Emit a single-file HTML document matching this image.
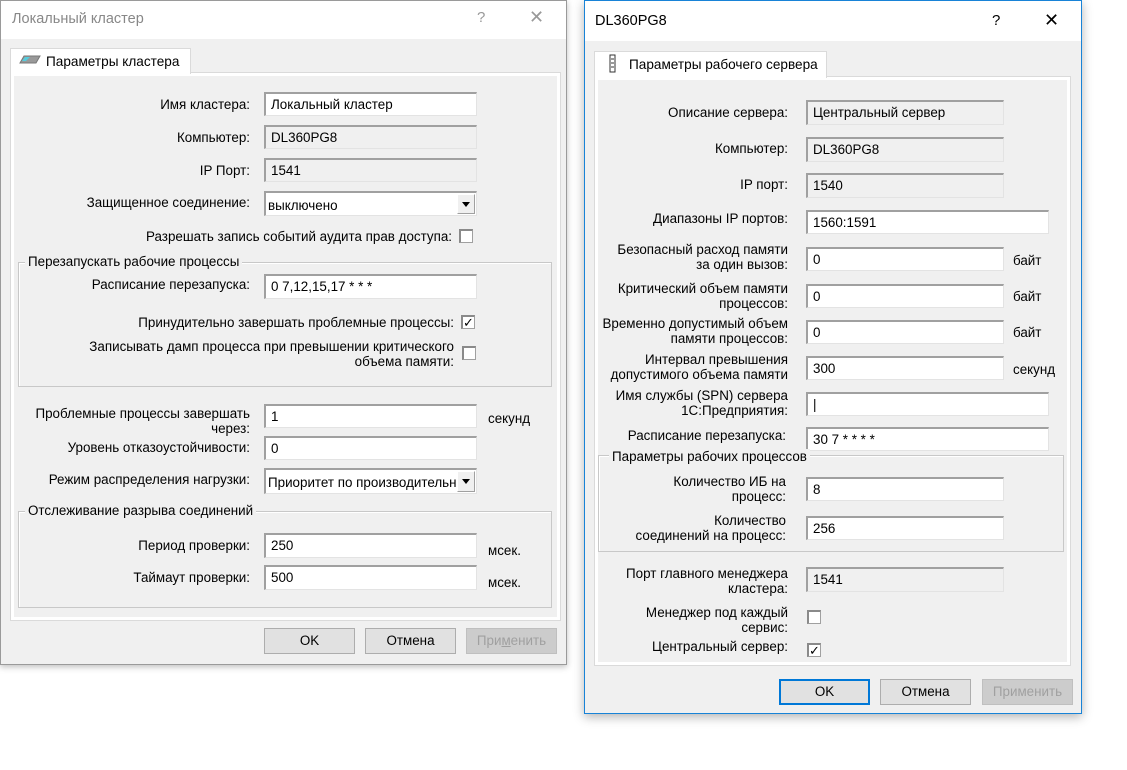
<!DOCTYPE html>
<html><head><meta charset="utf-8"><style>
*{box-sizing:border-box;margin:0;padding:0}
body{width:1127px;height:770px;background:#fff;position:relative;overflow:hidden;font-family:"Liberation Sans","DejaVu Sans",sans-serif;font-size:13.4px;color:#000}
div{position:absolute}
.dlg{background:#f0f0f0}
.tb{background:#fff;left:0;right:0;top:0}
.panel{background:#f0f0f0;border:1px solid #dadada;box-shadow:inset 0 0 0 3px #fff}
.tab{background:#fff;border:1px solid #dadada;border-bottom:none}
.l{text-align:right;line-height:15px;white-space:nowrap}
.in{background:#fff;border:1px solid #e3e3e3;border-top:2px solid #a0a0a0;border-left:2px solid #a0a0a0;padding:3px 0 0 5px;white-space:nowrap;overflow:hidden;line-height:15px}
.ro{background:#f0f0f0}
.cb{width:14px;height:14px;background:#fff;border:1px solid #a0a0a0;border-top:2px solid #8a8a8a;border-left:2px solid #8a8a8a;font-size:13px;line-height:11px;text-align:center;font-weight:bold}
.dd{right:1px;top:1px;width:18px;bottom:1px;background:#f0f0f0;border:1px solid #a0a0a0;border-top-color:#fff;border-left-color:#fff}
.dd:after{content:"";position:absolute;left:4px;top:7px;border-left:4px solid transparent;border-right:4px solid transparent;border-top:5px solid #000}
.grp{border:1px solid #c8c8c8;box-shadow:inset 1px 1px 0 #fff}
.lg{background:#f0f0f0;padding:0 3px;line-height:15px;white-space:nowrap}
.btn{height:26px;background:#e1e1e1;border:1px solid #adadad;text-align:center;line-height:24px}
.dis{color:#a0a0a0;background:#ccc;border-color:#bfbfbf}
</style></head><body>

<!-- LEFT DIALOG -->
<div class="dlg" style="left:0;top:0;width:567px;height:665px;border:1px solid #9a9a9a;box-shadow:0 2px 6px rgba(0,0,0,.25)">
 <div class="tb" style="height:38px"></div>
 <div style="left:11px;top:10px;font-size:14.5px;color:#888">Локальный кластер</div>
 <div style="left:476px;top:8px;font-size:15px;color:#999">?</div>
 <div style="left:528px;top:6px;font-size:18px;color:#999;font-weight:100">✕</div>
 <div class="panel" style="left:9px;top:71px;width:551px;height:549px"></div>
 <div class="tab" style="left:9px;top:47px;width:181px;height:26px"></div>
 <svg style="position:absolute;left:17px;top:52px" width="24" height="14"><polygon points="6,3 22,3 18,10 2,10" fill="#999" stroke="#777"/><polygon points="7,4 12,4 8,8 4,8" fill="#5cd"/></svg>
 <div style="left:45px;top:53px;font-size:13.6px">Параметры кластера</div>

 <div class="l" style="left:0;width:249px;top:96px">Имя кластера:</div>
 <div class="in" style="left:263px;top:91px;width:213px;height:24px">Локальный кластер</div>
 <div class="l" style="left:0;width:249px;top:129px">Компьютер:</div>
 <div class="in ro" style="left:263px;top:124px;width:213px;height:24px">DL360PG8</div>
 <div class="l" style="left:0;width:249px;top:162px">IP Порт:</div>
 <div class="in ro" style="left:263px;top:157px;width:213px;height:24px">1541</div>
 <div class="l" style="left:0;width:249px;top:194px">Защищенное соединение:</div>
 <div class="in" style="left:263px;top:190px;width:213px;height:25px;padding-top:5px;padding-left:2px">выключено<div class="dd"></div></div>
 <div class="l" style="left:0;width:451px;top:228px">Разрешать запись событий аудита прав доступа:</div>
 <div class="cb" style="left:458px;top:228px"></div>

 <div class="grp" style="left:17px;top:261px;width:534px;height:125px"></div>
 <div class="lg" style="left:24px;top:253px">Перезапускать рабочие процессы</div>
 <div class="l" style="left:0;width:249px;top:276px">Расписание перезапуска:</div>
 <div class="in" style="left:263px;top:273px;width:213px;height:25px">0 7,12,15,17 * * *</div>
 <div class="l" style="left:0;width:453px;top:314px">Принудительно завершать проблемные процессы:</div>
 <div class="cb" style="left:460px;top:314px">✓</div>
 <div class="l" style="left:0;width:453px;top:338px">Записывать дамп процесса при превышении критического<br>объема памяти:</div>
 <div class="cb" style="left:461px;top:345px"></div>

 <div class="l" style="left:0;width:249px;top:405px">Проблемные процессы завершать<br>через:</div>
 <div class="in" style="left:263px;top:403px;width:213px;height:24px">1</div>
 <div style="left:487px;top:410px">секунд</div>
 <div class="l" style="left:0;width:249px;top:439px">Уровень отказоустойчивости:</div>
 <div class="in" style="left:263px;top:435px;width:213px;height:24px">0</div>
 <div class="l" style="left:0;width:249px;top:471px">Режим распределения нагрузки:</div>
 <div class="in" style="left:263px;top:467px;width:213px;height:26px;padding-top:5px;padding-left:2px">Приоритет по производительн<div class="dd"></div></div>

 <div class="grp" style="left:17px;top:510px;width:534px;height:97px"></div>
 <div class="lg" style="left:24px;top:502px">Отслеживание разрыва соединений</div>
 <div class="l" style="left:0;width:249px;top:537px">Период проверки:</div>
 <div class="in" style="left:263px;top:532px;width:213px;height:25px">250</div>
 <div style="left:487px;top:542px">мсек.</div>
 <div class="l" style="left:0;width:249px;top:569px">Таймаут проверки:</div>
 <div class="in" style="left:263px;top:564px;width:213px;height:25px">500</div>
 <div style="left:487px;top:574px">мсек.</div>

 <div class="btn" style="left:263px;top:627px;width:91px">OK</div>
 <div class="btn" style="left:364px;top:627px;width:91px">Отмена</div>
 <div class="btn dis" style="left:465px;top:627px;width:91px">При<u>м</u>енить</div>
</div>

<!-- RIGHT DIALOG -->
<div class="dlg" style="left:584px;top:0;width:498px;height:714px;border:1px solid #1883d7;box-shadow:0 3px 10px rgba(0,0,0,.3)">
 <div class="tb" style="height:40px"></div>
 <div style="left:10px;top:12px;font-size:14.5px">DL360PG8</div>
 <div style="left:407px;top:11px;font-size:15px">?</div>
 <div style="left:459px;top:9px;font-size:18px;font-weight:100">✕</div>
 <div class="panel" style="left:9px;top:75px;width:477px;height:590px"></div>
 <div class="tab" style="left:9px;top:50px;width:233px;height:27px"></div>
 <svg style="position:absolute;left:23px;top:53px" width="10" height="20"><rect x="2" y="1" width="5" height="17" fill="#fff" stroke="#333"/><line x1="3" y1="5" x2="6" y2="5" stroke="#333"/><line x1="3" y1="9" x2="6" y2="9" stroke="#333"/><line x1="3" y1="13" x2="6" y2="13" stroke="#333"/></svg>
 <div style="left:44px;top:56px;font-size:13.6px">Параметры рабочего сервера</div>

 <div class="l" style="left:0;width:203px;top:104px">Описание сервера:</div>
 <div class="in ro" style="left:221px;top:99px;width:198px;height:25px">Центральный сервер</div>
 <div class="l" style="left:0;width:203px;top:140px">Компьютер:</div>
 <div class="in ro" style="left:221px;top:136px;width:198px;height:25px">DL360PG8</div>
 <div class="l" style="left:0;width:203px;top:176px">IP порт:</div>
 <div class="in ro" style="left:221px;top:172px;width:198px;height:25px">1540</div>
 <div class="l" style="left:0;width:203px;top:210px">Диапазоны IP портов:</div>
 <div class="in" style="left:221px;top:209px;width:243px;height:24px">1560:1591</div>
 <div class="l" style="left:0;width:203px;top:241px">Безопасный расход памяти<br>за один вызов:</div>
 <div class="in" style="left:221px;top:246px;width:198px;height:24px">0</div>
 <div style="left:428px;top:252px">байт</div>
 <div class="l" style="left:0;width:203px;top:280px">Критический объем памяти<br>процессов:</div>
 <div class="in" style="left:221px;top:283px;width:198px;height:24px">0</div>
 <div style="left:428px;top:288px">байт</div>
 <div class="l" style="left:0;width:203px;top:315px">Временно допустимый объем<br>памяти процессов:</div>
 <div class="in" style="left:221px;top:319px;width:198px;height:24px">0</div>
 <div style="left:428px;top:324px">байт</div>
 <div class="l" style="left:0;width:203px;top:351px">Интервал превышения<br>допустимого объема памяти</div>
 <div class="in" style="left:221px;top:355px;width:198px;height:24px">300</div>
 <div style="left:428px;top:361px">секунд</div>
 <div class="l" style="left:0;width:203px;top:387px">Имя службы (SPN) сервера<br>1С:Предприятия:</div>
 <div class="in" style="left:221px;top:391px;width:243px;height:24px">|</div>
 <div class="l" style="left:0;width:201px;top:427px">Расписание перезапуска:</div>
 <div class="in" style="left:221px;top:426px;width:243px;height:24px">30 7 * * * *</div>

 <div class="grp" style="left:13px;top:454px;width:466px;height:97px"></div>
 <div class="lg" style="left:24px;top:448px">Параметры рабочих процессов</div>
 <div class="l" style="left:0;width:201px;top:473px">Количество ИБ на<br>процесс:</div>
 <div class="in" style="left:221px;top:476px;width:198px;height:24px">8</div>
 <div class="l" style="left:0;width:201px;top:512px">Количество<br>соединений на процесс:</div>
 <div class="in" style="left:221px;top:515px;width:198px;height:24px">256</div>

 <div class="l" style="left:0;width:203px;top:565px">Порт главного менеджера<br>кластера:</div>
 <div class="in ro" style="left:221px;top:566px;width:198px;height:25px">1541</div>
 <div class="l" style="left:0;width:203px;top:604px">Менеджер под каждый<br>сервис:</div>
 <div class="cb" style="left:222px;top:609px"></div>
 <div class="l" style="left:0;width:203px;top:638px">Центральный сервер:</div>
 <div class="cb" style="left:222px;top:642px">✓</div>

 <div class="btn" style="left:194px;top:678px;width:91px;border:2px solid #0078d7;line-height:22px">OK</div>
 <div class="btn" style="left:295px;top:678px;width:91px">Отмена</div>
 <div class="btn dis" style="left:397px;top:678px;width:91px">Применить</div>
</div>
</body></html>
